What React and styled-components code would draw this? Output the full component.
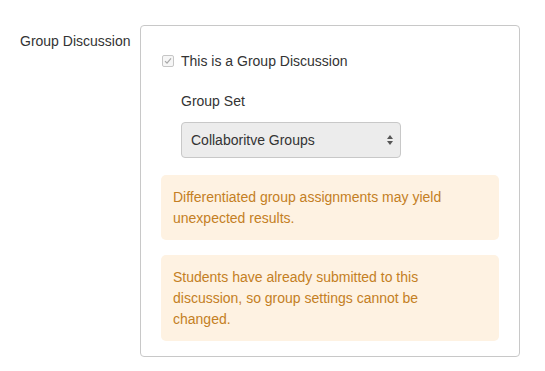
import React from 'react';
import styled, { createGlobalStyle } from 'styled-components';

const Global = createGlobalStyle`
  body {
    margin: 0;
    background: #fff;
    font-family: "Liberation Sans", Arial, sans-serif;
    color: #333;
  }
`;

const Page = styled.div`
  display: flex;
  padding: 25px 0 0 0;
`;

const FieldLabel = styled.div`
  width: 120px;
  padding-left: 20px;
  margin-top: 6px;
  font-size: 14px;
  line-height: 20px;
  color: #333;
`;

const Panel = styled.div`
  width: 380px;
  border: 1px solid #c8c8c8;
  border-radius: 4px;
  padding: 25px 20px 15px 20px;
  box-sizing: border-box;
`;

const CheckRow = styled.label`
  display: flex;
  align-items: center;
  gap: 7px;
  font-size: 14px;
  line-height: 20px;
  padding-left: 1px;
`;

const Check = styled.span`
  width: 10px;
  height: 10px;
  border: 1px solid #c6c6c6;
  border-radius: 2px;
  background: #f6f6f6;
  display: flex;
  align-items: center;
  justify-content: center;
`;

const Indented = styled.div`
  padding-left: 20px;
  margin-top: 20px;
`;

const SubLabel = styled.div`
  font-size: 14px;
  line-height: 20px;
  margin-bottom: 11px;
`;

const Select = styled.div`
  width: 220px;
  height: 36px;
  box-sizing: border-box;
  border: 1px solid #c8c8c8;
  border-radius: 4px;
  background: #ececec;
  display: flex;
  align-items: center;
  justify-content: space-between;
  padding: 0 6px 0 9px;
  font-size: 14px;
  color: #333;
`;

const Alert = styled.div`
  background: #fef2e2;
  color: #c47f24;
  border-radius: 5px;
  font-size: 14px;
  line-height: 21px;
  padding: 12px 12px 11px 12px;
  margin-top: ${p => p.gap}px;
  max-width: 338px;
  box-sizing: border-box;
  & span {
    display: block;
    max-width: 282px;
  }
`;

const App = () => (
  <>
    <Global />
    <Page>
      <FieldLabel>Group Discussion</FieldLabel>
      <Panel>
        <CheckRow>
          <Check>
            <svg width="8" height="8" viewBox="0 0 8 8">
              <path d="M1 4.2 L3 6.2 L7 1.3" fill="none" stroke="#a8a8a8" strokeWidth="1.2" />
            </svg>
          </Check>
          This is a Group Discussion
        </CheckRow>
        <Indented>
          <SubLabel>Group Set</SubLabel>
          <Select>
            Collaboritve Groups
            <svg width="8" height="12" viewBox="0 0 8 12">
              <path d="M4 1 L7 5 L1 5 Z" fill="#555" />
              <path d="M4 11 L7 7 L1 7 Z" fill="#555" />
            </svg>
          </Select>
        </Indented>
        <Alert gap={17}>
          <span>Differentiated group assignments may yield unexpected results.</span>
        </Alert>
        <Alert gap={15}>
          <span>Students have already submitted to this discussion, so group settings cannot be changed.</span>
        </Alert>
      </Panel>
    </Page>
  </>
);

export default App;
